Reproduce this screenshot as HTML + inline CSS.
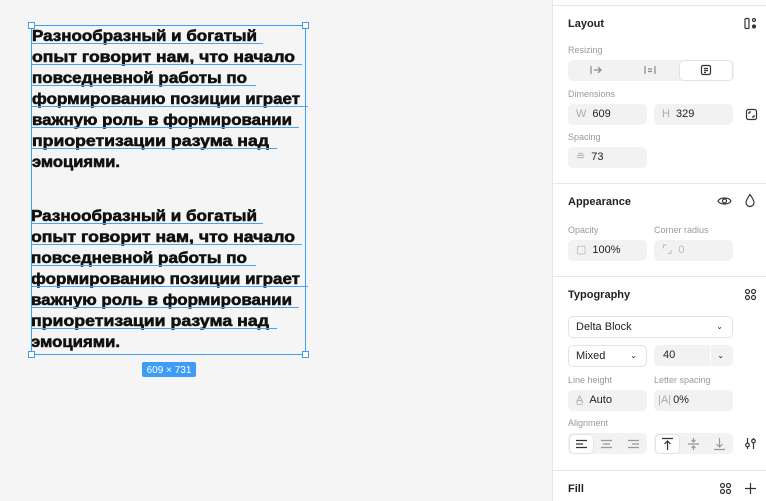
<!DOCTYPE html>
<html><head><meta charset="utf-8"><style>
*{margin:0;padding:0;box-sizing:border-box}
body{width:766px;height:501px;overflow:hidden;background:#f5f5f5;font-family:"Liberation Sans",sans-serif;position:relative}
.panel{position:absolute;left:552px;top:0;width:214px;height:501px;background:#fff;border-left:1px solid #e6e6e6}
.sep{position:absolute;left:0;right:0;height:1px;background:#e6e6e6}
.h{position:absolute;left:15px;font-size:11px;font-weight:bold;color:#222}
.l{position:absolute;font-size:9px;color:#999}
.f{position:absolute;background:#f2f2f2;border-radius:5px;height:21px;font-size:11px;color:#222;line-height:21px}
.g{color:#aaa;margin:0 6px 0 8px}
.w{position:absolute;background:#fff;border:1px solid #e3e3e3;border-radius:5px;height:22px;font-size:11px;line-height:20px;color:#222}
svg.i{position:absolute;fill:none;stroke:#333;stroke-width:1.2}
</style></head><body>
<svg width="552" height="501" style="position:absolute;left:0;top:0" font-family="Liberation Sans, DejaVu Sans, sans-serif" font-weight="bold" font-size="16">
<g fill="#111" stroke="#111" stroke-width="0.6">
<text x="32" y="41" textLength="225" lengthAdjust="spacingAndGlyphs">Разнообразный и богатый</text>
<text x="32" y="62" textLength="263" lengthAdjust="spacingAndGlyphs">опыт говорит нам, что начало</text>
<text x="32" y="83" textLength="215" lengthAdjust="spacingAndGlyphs">повседневной работы по</text>
<text x="32" y="104" textLength="268" lengthAdjust="spacingAndGlyphs">формированию позиции играет</text>
<text x="32" y="125" textLength="260" lengthAdjust="spacingAndGlyphs">важную роль в формировании</text>
<text x="32" y="146" textLength="237" lengthAdjust="spacingAndGlyphs">приоретизации разума над</text>
<text x="32" y="167" textLength="88" lengthAdjust="spacingAndGlyphs">эмоциями.</text>
<text x="31" y="221" textLength="226" lengthAdjust="spacingAndGlyphs">Разнообразный и богатый</text>
<text x="31" y="242" textLength="264" lengthAdjust="spacingAndGlyphs">опыт говорит нам, что начало</text>
<text x="31" y="263" textLength="216" lengthAdjust="spacingAndGlyphs">повседневной работы по</text>
<text x="31" y="284" textLength="269" lengthAdjust="spacingAndGlyphs">формированию позиции играет</text>
<text x="31" y="305" textLength="261" lengthAdjust="spacingAndGlyphs">важную роль в формировании</text>
<text x="31" y="326" textLength="238" lengthAdjust="spacingAndGlyphs">приоретизации разума над</text>
<text x="31" y="347" textLength="89" lengthAdjust="spacingAndGlyphs">эмоциями.</text>
</g>
<g stroke="#4aa3f5" stroke-width="1">
<line x1="32" y1="43.5" x2="263" y2="43.5"/><line x1="32" y1="64.5" x2="302" y2="64.5"/><line x1="32" y1="85.5" x2="256" y2="85.5"/><line x1="32" y1="106.5" x2="308" y2="106.5"/><line x1="32" y1="127.5" x2="299" y2="127.5"/><line x1="32" y1="148.5" x2="277" y2="148.5"/>
<line x1="31" y1="223.5" x2="263" y2="223.5"/><line x1="31" y1="244.5" x2="302" y2="244.5"/><line x1="31" y1="265.5" x2="256" y2="265.5"/><line x1="31" y1="286.5" x2="308" y2="286.5"/><line x1="31" y1="307.5" x2="299" y2="307.5"/><line x1="31" y1="328.5" x2="277" y2="328.5"/>
</g>
<rect x="31.5" y="25.5" width="274" height="329" fill="none" stroke="#3d9cf5"/>
<g fill="#fff" stroke="#3d9cf5"><rect x="28.5" y="22.5" width="6" height="6"/><rect x="302.5" y="22.5" width="6" height="6"/><rect x="28.5" y="351.5" width="6" height="6"/><rect x="302.5" y="351.5" width="6" height="6"/></g>
<rect x="142" y="362" width="54" height="15" rx="2" fill="#3d9cf5"/>
<text x="169" y="373" fill="#fff" font-weight="normal" font-size="10" text-anchor="middle">609 × 731</text>
</svg>
<div class="panel">
<div class="sep" style="top:5px"></div>
<div class="h" style="top:18px">Layout</div>
<svg class="i" style="left:191px;top:17px" width="14" height="14"><rect x="1" y="1.5" width="4" height="10" rx="1"/><circle cx="10" cy="3" r="1.5"/><circle cx="10" cy="9.5" r="1.5" fill="#333"/></svg>
<div class="l" style="left:15px;top:45px">Resizing</div>
<div class="f" style="left:15px;top:60px;width:166px;height:21px"></div>
<svg class="i" style="left:36px;top:64px;stroke:#888" width="14" height="12"><path d="M2 2v8M5 6h7M9 3l3 3-3 3"/></svg>
<svg class="i" style="left:90px;top:64px;stroke:#888" width="14" height="12"><path d="M2 2v8M12 2v8M5 5h4M5 7.5h4"/></svg>
<div class="w" style="left:126px;top:60px;width:54px;height:21px"></div>
<svg class="i" style="left:147px;top:64px" width="12" height="12"><rect x="1.5" y="1.5" width="9" height="9" rx="1.5"/><path d="M4 4.5h4M4 6.5h4M4 8.5h2"/></svg>
<div class="l" style="left:15px;top:89px">Dimensions</div>
<div class="f" style="left:15px;top:104px;width:79px"><span class="g">W</span>609</div>
<div class="f" style="left:101px;top:104px;width:79px"><span class="g">H</span>329</div>
<svg class="i" style="left:192px;top:108px" width="13" height="13"><rect x="1.5" y="1.5" width="10" height="10" rx="2"/><path d="M4 4h2M4 4v2M9 9H7M9 9V7"/></svg>
<div class="l" style="left:15px;top:132px">Spacing</div>
<div class="f" style="left:15px;top:147px;width:79px"><span class="g">≘</span>73</div>
<div class="sep" style="top:183px"></div>
<div class="h" style="top:196px">Appearance</div>
<svg class="i" style="left:164px;top:195px" width="15" height="12"><path d="M1 6C3 2 12 2 14 6C12 10 3 10 1 6Z"/><circle cx="7.5" cy="6" r="2"/></svg>
<svg class="i" style="left:191px;top:193px" width="12" height="15"><path d="M6 1.5C4 4.5 2 7 2 9.5a4 4 0 0 0 8 0C10 7 8 4.5 6 1.5Z"/></svg>
<div class="l" style="left:15px;top:225px">Opacity</div><div class="l" style="left:101px;top:225px">Corner radius</div>
<div class="f" style="left:15px;top:240px;width:79px"><span class="g">▢</span>100%</div>
<div class="f" style="left:101px;top:240px;width:79px;color:#bbb"><span class="g">⌜⌟</span>0</div>
<div class="sep" style="top:276px"></div>
<div class="h" style="top:289px">Typography</div>
<svg class="i" style="left:191px;top:288px" width="13" height="13"><circle cx="3.5" cy="3.5" r="2"/><circle cx="9.5" cy="3.5" r="2"/><circle cx="3.5" cy="9.5" r="2"/><circle cx="9.5" cy="9.5" r="2"/></svg>
<div class="w" style="left:15px;top:316px;width:165px;padding-left:7px">Delta Block<span style="position:absolute;right:9px;font-size:8px">⌄</span></div>
<div class="w" style="left:15px;top:345px;width:79px;padding-left:7px">Mixed<span style="position:absolute;right:9px;font-size:8px">⌄</span></div>
<div class="f" style="left:101px;top:345px;width:79px;padding-left:9px">40<span style="position:absolute;left:56px;top:0;width:1px;height:21px;background:#fff"></span><span style="position:absolute;right:9px;font-size:8px">⌄</span></div>
<div class="l" style="left:15px;top:375px">Line height</div><div class="l" style="left:101px;top:375px">Letter spacing</div>
<div class="f" style="left:15px;top:390px;width:79px"><span class="g">A̲</span>Auto</div>
<div class="f" style="left:101px;top:390px;width:79px"><span class="g" style="margin-right:2px;margin-left:4px">|A|</span>0%</div>
<div class="l" style="left:15px;top:418px">Alignment</div>
<div class="f" style="left:15px;top:433px;width:79px"></div>
<div class="w" style="left:16px;top:434px;width:25px;height:20px"></div>
<svg class="i" style="left:22px;top:438px" width="13" height="12"><path d="M1 2.5h11M1 6h7M1 9.5h11"/></svg>
<svg class="i" style="left:47px;top:438px;stroke:#999" width="13" height="12"><path d="M1 2.5h11M3 6h7M1 9.5h11"/></svg>
<svg class="i" style="left:74px;top:438px;stroke:#999" width="13" height="12"><path d="M1 2.5h11M5 6h7M1 9.5h11"/></svg>
<div class="f" style="left:101px;top:433px;width:79px"></div>
<div class="w" style="left:102px;top:434px;width:25px;height:20px"></div>
<svg class="i" style="left:108px;top:437px" width="13" height="14"><path d="M1 1.5h11M6.5 4v9M3.5 7l3-3 3 3"/></svg>
<svg class="i" style="left:134px;top:437px;stroke:#999" width="13" height="14"><path d="M1 7h11M6.5 1v4M6.5 9v4M4.5 3l2 2 2-2M4.5 11l2-2 2 2"/></svg>
<svg class="i" style="left:160px;top:437px;stroke:#999" width="13" height="14"><path d="M1 12.5h11M6.5 1v9M3.5 7l3 3 3-3"/></svg>
<svg class="i" style="left:191px;top:437px" width="13" height="13"><path d="M3.5 1v11M9.5 1v11"/><circle cx="3.5" cy="8" r="1.8" fill="#fff"/><circle cx="9.5" cy="4" r="1.8" fill="#fff"/></svg>
<div class="sep" style="top:470px"></div>
<div class="h" style="top:483px">Fill</div>
<svg class="i" style="left:166px;top:482px" width="13" height="13"><circle cx="3.5" cy="3.5" r="2"/><circle cx="9.5" cy="3.5" r="2"/><circle cx="3.5" cy="9.5" r="2"/><circle cx="9.5" cy="9.5" r="2"/></svg>
<svg class="i" style="left:191px;top:482px" width="13" height="13"><path d="M6.5 1v11M1 6.5h11"/></svg>
</div>
</body></html>
